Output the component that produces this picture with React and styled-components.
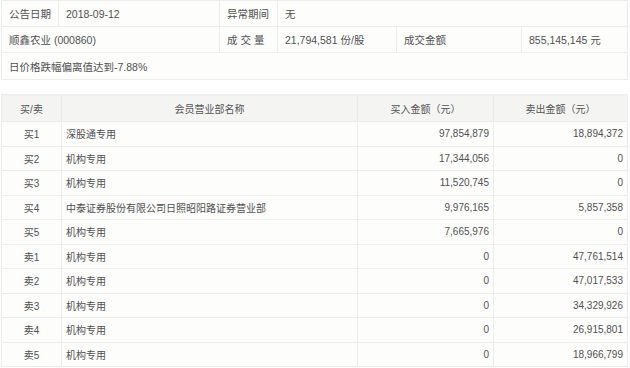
import React from "react";
import styled, { createGlobalStyle } from "styled-components";

const GlobalStyle = createGlobalStyle`
    body {
        margin: 0;
        background: #ffffff;
        font-family: "Liberation Sans", "Noto Sans CJK SC", sans-serif;
        color: #505050;
    }
`;

const infoRows = [
    ["买1", "深股通专用", "97,854,879", "18,894,372"],
    ["买2", "机构专用", "17,344,056", "0"],
    ["买3", "机构专用", "11,520,745", "0"],
    ["买4", "中泰证券股份有限公司日照昭阳路证券营业部", "9,976,165", "5,857,358"],
    ["买5", "机构专用", "7,665,976", "0"],
    ["卖1", "机构专用", "0", "47,761,514"],
    ["卖2", "机构专用", "0", "47,017,533"],
    ["卖3", "机构专用", "0", "34,329,926"],
    ["卖4", "机构专用", "0", "26,915,801"],
    ["卖5", "机构专用", "0", "18,966,799"],
];

function App() {
    return (
        <StyledPage>
            <GlobalStyle />
            <StyledSummary>
                <colgroup>
                    <col style={{ width: 57 }} />
                    <col style={{ width: 161 }} />
                    <col style={{ width: 58 }} />
                    <col style={{ width: 119 }} />
                    <col style={{ width: 125 }} />
                    <col />
                </colgroup>
                <tbody>
                    <tr>
                        <StyledCell>公告日期</StyledCell>
                        <StyledCell>2018-09-12</StyledCell>
                        <StyledCell>异常期间</StyledCell>
                        <StyledCell colSpan={3}>无</StyledCell>
                    </tr>
                    <tr>
                        <StyledCell colSpan={2}>顺鑫农业 (000860)</StyledCell>
                        <StyledCell $spaced>成交量</StyledCell>
                        <StyledCell>21,794,581 份/股</StyledCell>
                        <StyledCell>成交金额</StyledCell>
                        <StyledCell>855,145,145 元</StyledCell>
                    </tr>
                    <tr>
                        <StyledCell colSpan={6} $tall>
                            日价格跌幅偏离值达到-7.88%
                        </StyledCell>
                    </tr>
                </tbody>
            </StyledSummary>

            <StyledDeals>
                <colgroup>
                    <col style={{ width: 60 }} />
                    <col style={{ width: 296 }} />
                    <col style={{ width: 136 }} />
                    <col />
                </colgroup>
                <thead>
                    <tr>
                        <StyledHead>买/卖</StyledHead>
                        <StyledHead>会员营业部名称</StyledHead>
                        <StyledHead>买入金额（元）</StyledHead>
                        <StyledHead>卖出金额（元）</StyledHead>
                    </tr>
                </thead>
                <tbody>
                    {infoRows.map(([side, name, buy, sell]) => (
                        <tr key={side}>
                            <StyledData $align="center">{side}</StyledData>
                            <StyledData>{name}</StyledData>
                            <StyledData $align="right">{buy}</StyledData>
                            <StyledData $align="right">{sell}</StyledData>
                        </tr>
                    ))}
                </tbody>
            </StyledDeals>
        </StyledPage>
    );
}

export default App;

const StyledPage = styled.div`
    width: 628px;
    padding-left: 1px;
    display: flex;
    flex-direction: column;
    gap: 14px;
`;

const StyledSummary = styled.table`
    width: 627px;
    table-layout: fixed;
    border-collapse: collapse;
    background: #fdfdfc;
    font-size: 10.5px;
`;

const StyledCell = styled.td`
    height: ${(props) => (props.$tall ? "26px" : "25px")};
    padding: 0 0 0 7px;
    border: 1px solid #ececec;
    white-space: nowrap;
    letter-spacing: ${(props) => (props.$spaced ? "3px" : "0")};
`;

const StyledDeals = styled.table`
    width: 627px;
    table-layout: fixed;
    border-collapse: collapse;
    background: #fdfdfc;
    font-size: 10px;
`;

const StyledHead = styled.th`
    height: 26px;
    padding: 0;
    font-weight: normal;
    background: #f4f4f3;
    border: 1px solid #ececec;
    color: #555;
`;

const StyledData = styled.td`
    height: 23.5px;
    padding: 0 4px;
    border: 1px solid #ececec;
    white-space: nowrap;
    text-align: ${(props) => props.$align || "left"};
`;
